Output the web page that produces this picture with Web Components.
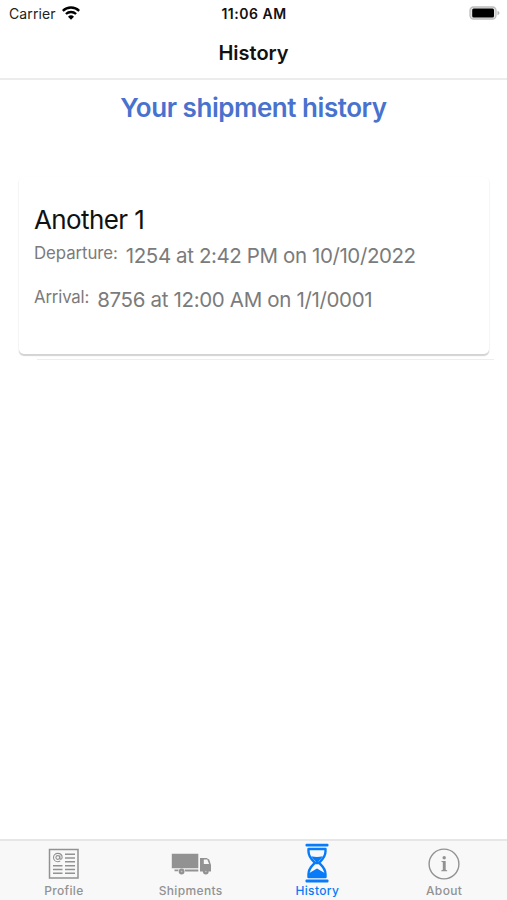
<!DOCTYPE html>
<html lang="en"><head><meta charset="utf-8"><title>History</title>
<style>
html,body{margin:0;height:100%;background:#fff}
body{font-family:Inter,"Liberation Sans",sans-serif;color:#000;overflow:hidden}
</style></head><body>
<app-screen>
  <status-bar slot="top"></status-bar>
  <nav-bar slot="top">History</nav-bar>
  <page-title>Your shipment history</page-title>
  <shipment-card>
    <span slot="name">Another 1</span>
    <shipment-row label="Departure:" style="--ls:-.06px;--vls:-.4px">1254 at 2:42 PM on 10/10/2022</shipment-row>
    <shipment-row label="Arrival:" style="--ls:-.16px;--vls:-.34px">8756 at 12:00 AM on 1/1/0001</shipment-row>
  </shipment-card>
  <list-divider></list-divider>
  <tab-bar slot="bottom">
    <tab-item icon="profile">Profile</tab-item>
    <tab-item icon="truck">Shipments</tab-item>
    <tab-item icon="hourglass" active>History</tab-item>
    <tab-item icon="info">About</tab-item>
  </tab-bar>
</app-screen>
<script>
const define=(name,html,setup)=>customElements.define(name,class extends HTMLElement{
  constructor(){super();this.attachShadow({mode:'open'}).innerHTML=html;if(setup)setup(this,this.shadowRoot)}
});
const icons={
profile:`<svg width="32" height="32" viewBox="0 0 32 32" fill="none" stroke="#929292"><rect x="1.5" y="1.5" width="28.5" height="28.5" stroke-width="1.5"/><path stroke-width="1.4" d="M17 6.2h10M17 10h10M17 13.800h10M5 17.700h9.500M17 17.700h10M5 21.500h9.500M17 21.500h10M5 25.300h9.500M17 25.300h10"/><circle cx="9.800" cy="9.500" r="1.900" stroke-width="1.100"/><path stroke-width="1.100" d="M11.900 7.500v2.600c0 1.700 2.200 1.500 2.200-.6 0-2.500-1.800-4.100-4.300-4.100S5.500 7.200 5.500 9.500s1.800 4.200 4.300 4.200c1 0 1.900-.3 2.500-.8"/></svg>`,
truck:`<svg width="40" height="22" viewBox="0 0 40 22"><g fill="#929292"><path d="M.8.700h26.500v14.600H.8zM3.500 16.500h4.200l-.7 1.800H3.500zM13.600 16.500h13.700v2H14.300zM29 5h6.500l2.700 1.500 1.800 5.500v6.500h-2.300a3 3 0 0 0-5.500 0H29z"/><circle cx="10.600" cy="18.500" r="2.900"/><circle cx="34.800" cy="18.500" r="2.900"/></g><path fill="#f7f7f7" d="M32.800 6.400h3.500l1.800 4.500h-5.300z"/><g fill="#c4c4c4"><circle cx="10.600" cy="18.500" r=".8"/><circle cx="34.800" cy="18.500" r=".8"/></g></svg>`,
hourglass:`<svg width="24" height="40" viewBox="0 0 24 40"><g fill="#087bf8"><rect x=".5" y=".700" width="23" height="2.700" rx="1"/><rect x=".5" y="36.600" width="23" height="2.800" rx="1"/><path d="M6.300 13.200q5.700 1.600 11.400 0-1.500 2.800-4.200 5v3h-3v-3q-2.700-2.200-4.200-5zM3.500 34v-3.500l8.500-5 8.500 5V34z"/></g><path fill="none" stroke="#087bf8" stroke-width="2.400" stroke-linejoin="round" d="M3.500 6h17v2.500c0 5.500-3.200 8-6.500 11.300 3.300 3.300 6.500 5.700 6.500 11.200v3h-17v-3c0-5.500 3.200-7.900 6.500-11.200C6.700 16.500 3.500 14 3.500 8.500z"/></svg>`,
info:`<svg width="32" height="32" viewBox="0 0 32 32"><circle cx="16" cy="16" r="14.900" fill="none" stroke="#929292" stroke-width="1.400"/><circle cx="16.200" cy="9.800" r="1.700" fill="#929292"/><path fill="#929292" d="M13.400 12.900h4.300v8.900l1.500.7v.8h-6v-.8l1.600-.7v-7.500l-1.400-.5z"/></svg>`};
define('status-bar',`<style>:host{display:grid;grid-template-columns:1fr auto 1fr;align-items:center;height:28px;padding:0 7px 2px 9px;box-sizing:border-box;line-height:17px}
.l{display:flex;align-items:center;gap:6px;font-size:14px;letter-spacing:.12px;color:#222}.t{font-size:14px;font-weight:600;letter-spacing:.5px;color:#111;margin-right:1px}.b{justify-self:end}svg{display:block}.l svg{margin-top:-1px}</style>
<div class="l"><span>Carrier</span><svg width="18" height="14" viewBox="0 0 18 14" fill="none" stroke="#000" stroke-width="2.300"><path d="M.8 4.800a11.800 11.800 0 0 1 16.400 0M3.900 8a7.500 7.500 0 0 1 10.200 0"/><path fill="#000" stroke="none" d="M6 10.700a4.300 4.300 0 0 1 6 0L9 13.700z"/></svg></div><span class="t">11:06 AM</span>
<div class="b"><svg width="31" height="14" viewBox="0 0 31 14"><rect x="1" y="1" width="26" height="12" rx="3.500" fill="#e4e4e4" stroke="#bdbdbd" stroke-width="1.300"/><rect x="3.200" y="2.600" width="21.800" height="8.900" rx="1.500"/><path fill="#b5b5b5" d="M28.500 4.800q2 .7 2 2.200t-2 2.200z"/></svg></div>`);
define('nav-bar',`<style>:host{display:flex;justify-content:center;align-items:center;height:52px;padding-bottom:1px;box-sizing:border-box;font-size:20px;line-height:24px;font-weight:600;letter-spacing:0;color:#111;border-bottom:2px solid #ececec}</style><slot></slot>`);
define('page-title',`<style>:host{display:block;text-align:center;padding-top:12px;height:97px;box-sizing:border-box;font-size:26px;line-height:32px;font-weight:580;letter-spacing:-.46px;color:#4872ce}</style><slot></slot>`);
define('shipment-card',`<style>:host{display:block;box-sizing:border-box;margin:0 18px 0 19px;height:177px;padding:27px 15px 0;background:#fff;border-radius:5px;box-shadow:0 2px 1px #d3d3d3,0 1px 2px #e8e8e8}
.n{display:block;font-size:26px;line-height:32px;letter-spacing:-.6px;color:#111;margin-bottom:6px}</style><slot name="name" class="n"></slot><slot></slot>`);
define('shipment-row',`<style>:host{display:flex;align-items:flex-start;gap:8px;height:44.300px;color:#7b7b7b;white-space:nowrap}.k{font-size:16.800px;line-height:22px;letter-spacing:var(--ls)}.v{font-size:20.500px;line-height:26px;letter-spacing:var(--vls);padding-top:.5px}</style><span class="k"></span><span class="v"><slot></slot></span>`,(h,r)=>r.querySelector('.k').textContent=h.getAttribute('label'));
define('list-divider',`<style>:host{display:block;height:1px;margin:5px 13px 0 37px;background:#eee}</style>`);
define('tab-bar',`<style>:host{display:grid;grid-template-columns:repeat(4,1fr);height:61px;box-sizing:border-box;background:#f8f8f8;border-top:2px solid #e6e6e6}</style><slot></slot>`);
define('tab-item',`<style>:host{display:flex;flex-direction:column;align-items:center;color:#929292;font-size:12px;line-height:15px;font-weight:500;letter-spacing:.35px;padding-left:1px}:host([active]){color:#087bf8}.i{height:42px;display:flex;align-items:center;margin:1px 0 -1px}:host(:not([active])) .i{padding-top:2px;height:40px}svg{display:block}</style><div class="i"></div><slot></slot>`,(h,r)=>r.querySelector('.i').innerHTML=icons[h.getAttribute('icon')]);
define('app-screen',`<style>:host{display:flex;flex-direction:column;height:100vh}main{flex:1}</style><header><slot name="top"></slot></header><main><slot></slot></main><footer><slot name="bottom"></slot></footer>`);
</script></body></html>
